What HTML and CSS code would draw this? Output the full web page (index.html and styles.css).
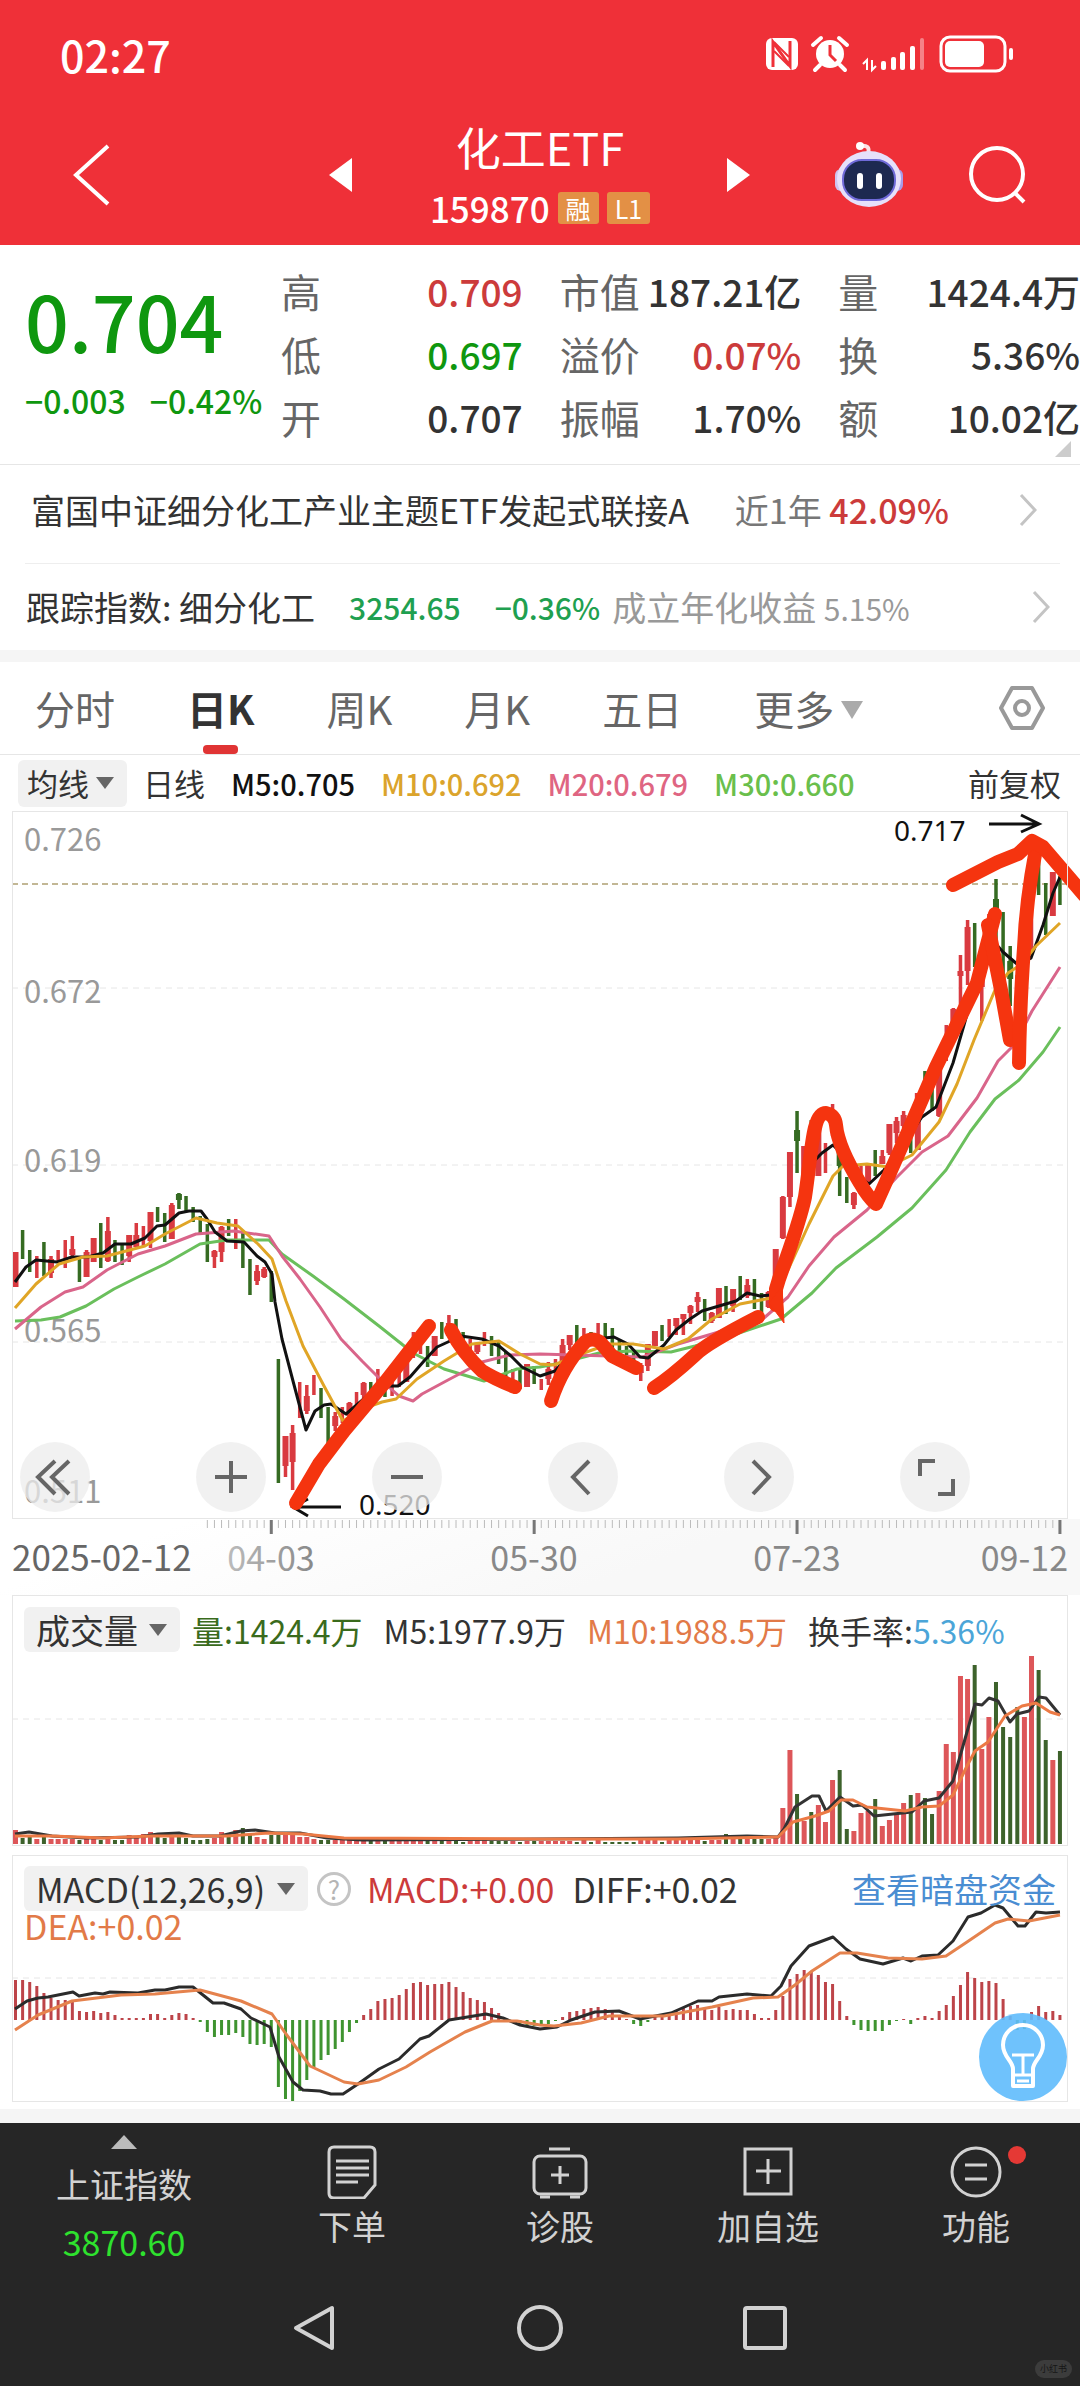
FILE: index.html
```html
<!DOCTYPE html>
<html lang="zh-CN">
<head>
    <meta charset="UTF-8">
    <meta name="viewport" content="width=device-width, initial-scale=1.0">
    <title>化工ETF 159870</title>
    <link rel="stylesheet" href="styles.css">
</head>
<body>

    <header class="header">
        <div class="status-bar">
            <span class="clock">02:27</span>
            <svg class="status-icons" width="250" height="40" viewBox="0 0 250 40" fill="#fff">
                <!-- nfc -->
                <rect x="2" y="4" width="32" height="32" rx="6"/>
                <path d="M9 33V8l17 24V7" fill="none" stroke="#ef3038" stroke-width="3"/>
                <path d="M10 8l15 15M10 17l15 15" stroke="#ef3038" stroke-width="2"/>
                <!-- alarm -->
                <circle cx="66" cy="20" r="14"/>
                <path d="M49 11l8-7M83 11l-8-7M56 31l-5 5M76 31l5 5" stroke="#fff" stroke-width="4" stroke-linecap="round"/>
                <path d="M66 11v10l6 6" fill="none" stroke="#ef3038" stroke-width="3"/>
                <!-- signal -->
                <path d="M103 36V26l-4 4M108 26v10l4-4" fill="none" stroke="#fff" stroke-width="2"/>
                <rect x="117" y="27" width="5" height="9" rx="2"/>
                <rect x="127" y="23" width="5" height="13" rx="2"/>
                <rect x="136" y="18" width="5" height="18" rx="2"/>
                <rect x="146" y="12" width="5" height="24" rx="2"/>
                <rect x="156" y="4" width="4" height="32" rx="2" opacity=".4"/>
                <!-- battery -->
                <rect x="177" y="3" width="64" height="34" rx="9" fill="none" stroke="#fff" stroke-width="3"/>
                <rect x="181" y="7" width="39" height="26" rx="5"/>
                <rect x="245" y="14" width="4" height="12" rx="2"/>
            </svg>
        </div>

        <div class="title-bar">
            <button class="icon-button back" aria-label="返回">
                <svg width="40" height="64" viewBox="0 0 40 64"><path d="M36 3L4 32l32 29" fill="none" stroke="#fff" stroke-width="4"/></svg>
            </button>
            <button class="icon-button prev" aria-label="上一个">
                <svg width="24" height="34" viewBox="0 0 24 34"><path d="M23 0v34L0 17z" fill="#fff"/></svg>
            </button>
            <div class="title">
                <h1>化工ETF</h1>
                <div class="code">159870 <span class="tag">融</span><span class="tag">L1</span></div>
            </div>
            <button class="icon-button next" aria-label="下一个">
                <svg width="24" height="34" viewBox="0 0 24 34"><path d="M0 0v34l23-17z" fill="#fff"/></svg>
            </button>
            <button class="icon-button robot" aria-label="智能助手">
                <svg width="72" height="68" viewBox="0 0 72 68">
                    <path d="M35 13C37 6 34 4 27 5" fill="none" stroke="#fbe3e6" stroke-width="4" stroke-linecap="round"/>
                    <circle cx="27" cy="5" r="4" fill="#fff"/>
                    <rect x="2" y="28" width="12" height="22" rx="6" fill="#cfc4f0"/>
                    <rect x="58" y="28" width="12" height="22" rx="6" fill="#a89be8"/>
                    <ellipse cx="36" cy="38" rx="32" ry="28" fill="#e6e0fa"/>
                    <rect x="10" y="19" width="52" height="40" rx="19" fill="#1d2950" stroke="#6f6ad8" stroke-width="2"/>
                    <rect x="24" y="32" width="6" height="16" rx="3" fill="#fff"/>
                    <rect x="43" y="32" width="6" height="16" rx="3" fill="#fff"/>
                </svg>
            </button>
            <button class="icon-button search" aria-label="搜索">
                <svg width="60" height="60" viewBox="0 0 60 60" fill="none" stroke="#fff" stroke-width="4"><circle cx="29" cy="29" r="26"/><path d="M46 47l10 10"/></svg>
            </button>
        </div>
    </header>

    <main>
        <section class="quote">
            <div class="price-block">
                <div class="price">0.704</div>
                <div class="change"><span>−0.003</span><span>−0.42%</span></div>
            </div>
            <dl class="stats">
                <div><dt>高</dt><dd class="up">0.709</dd></div>
                <div><dt>低</dt><dd class="down">0.697</dd></div>
                <div><dt>开</dt><dd>0.707</dd></div>
            </dl>
            <dl class="stats">
                <div><dt>市值</dt><dd>187.21亿</dd></div>
                <div><dt>溢价</dt><dd class="up">0.07%</dd></div>
                <div><dt>振幅</dt><dd>1.70%</dd></div>
            </dl>
            <dl class="stats">
                <div><dt>量</dt><dd>1424.4万</dd></div>
                <div><dt>换</dt><dd>5.36%</dd></div>
                <div><dt>额</dt><dd>10.02亿</dd></div>
            </dl>
            <span class="corner"></span>
        </section>

        <a class="info-row fund" href="#fund">
            <span>富国中证细分化工产业主题ETF发起式联接A</span>
            <span class="period">近1年 <b>42.09%</b></span>
            <svg class="chevron" width="18" height="34" viewBox="0 0 18 34"><path d="M2 2l14 15L2 32"/></svg>
        </a>
        <a class="info-row index" href="#index">
            <span>跟踪指数: 细分化工</span>
            <span class="index-value">3254.65</span>
            <span class="index-value">−0.36%</span>
            <span class="since">成立年化收益 <small>5.15%</small></span>
            <svg class="chevron" width="18" height="34" viewBox="0 0 18 34"><path d="M2 2l14 15L2 32"/></svg>
        </a>

        <div class="band"></div>

        <nav class="tabs">
            <button>分时</button>
            <button class="active">日K</button>
            <button>周K</button>
            <button>月K</button>
            <button>五日</button>
            <button class="more">更多</button>
            <button class="settings" aria-label="图表设置">
                <svg width="48" height="46" viewBox="0 0 48 46" fill="none" stroke="#999" stroke-width="4"><path d="M14 3h20l11 20-11 20H14L3 23z" stroke-linejoin="round"/><circle cx="24" cy="23" r="7"/></svg>
            </button>
        </nav>

        <div class="ma-row">
            <div class="dropdown small"><select aria-label="主图指标"><option>均线</option></select></div>
            <span class="kind">日线</span>
            <span class="ma5">M5:0.705</span>
            <span class="ma10">M10:0.692</span>
            <span class="ma20">M20:0.679</span>
            <span class="ma30">M30:0.660</span>
            <button class="adjust">前复权</button>
        </div>

        <section class="panel kline">
            <svg viewBox="0 0 1056 708">
                <g class="grid"><path d="M0 177h1056M0 354h1056M0 531h1056"/></g>
                <path class="last-price" d="M0 73h1056"/>
                <g class="scale">
                    <text x="12" y="40">0.726</text>
                    <text x="12" y="192">0.672</text>
                    <text x="12" y="361">0.619</text>
                    <text x="12" y="531">0.565</text>
                    <text x="12" y="692">0.511</text>
                </g>
                <g id="candles"></g>
                <g class="lines">
                    <polyline stroke="#6abf5c" points="3,510 29,509 48,506 74,495 102,478 126,466 153,453 188,433 215,429 257,429 270,443 301,465 332,488 367,515 401,542 432,558 472,570 505,558 528,556 549,552 587,542 618,540 659,541 683,535 721,524 769,508 800,482 824,457 865,426 900,397 934,359 958,321 983,288 1007,269 1031,241 1048,216"/>
                    <polyline stroke="#d9658a" points="3,518 29,496 53,481 71,476 95,459 126,443 153,435 184,423 222,420 257,425 270,445 288,468 308,496 329,528 350,550 370,570 387,585 401,590 410,583 436,569 470,551 498,544 528,543 562,544 631,546 666,533 700,523 752,507 776,486 797,455 822,426 855,399 884,367 910,341 936,325 965,287 986,250 1003,233 1020,200 1048,156"/>
                    <polyline stroke="#111" points="3,471 14,456 24,449 45,451 60,446 76,446 91,442 103,433 119,433 133,427 145,415 153,414 167,402 177,400 189,400 195,408 203,421 215,430 232,431 245,445 253,451 260,463 263,491 270,528 281,570 294,619 303,600 312,594 319,593 334,603 367,575 386,575 398,566 412,550 425,536 449,525 470,528 487,535 499,545 510,556 528,565 543,560 562,539 583,528 602,526 616,533 628,546 636,547 652,534 664,519 678,508 690,500 707,495 724,490 735,482 748,485 759,484 769,463 783,409 797,355 810,342 821,334 831,344 845,365 857,373 872,359 886,340 910,306 924,296 941,252 952,214 965,168 983,132 991,141 1005,153 1019,147 1031,114 1041,82 1048,66"/>
                    <polyline stroke="#e0a526" points="3,497 24,473 47,453 71,446 95,445 133,435 153,423 184,407 205,412 226,415 246,433 260,448 274,490 291,535 312,575 331,610 350,598 370,591 384,588 405,568 432,550 460,533 487,530 508,543 528,553 542,554 569,543 597,533 621,533 652,538 676,528 700,508 728,493 759,487 776,459 797,413 821,365 831,355 855,353 876,356 900,344 927,311 945,273 962,229 983,179 996,162 1010,153 1024,135 1048,112"/>
                </g>
                <!-- high / low markers -->
                <g class="marker">
                    <text x="882" y="30">0.717</text>
                    <path d="M977 13h50M1009 4l18 9-18 8"/>
                    <text x="347" y="704">0.520</text>
                    <path d="M329 696h-48M296 688l-15 8 15 9"/>
                </g>
                <!-- freehand trend drawing -->
                <g class="drawing">
                    <path d="M284 692L307 653L332 620L374 570L417 515"/>
                    <path d="M439 519Q450 541 470 560Q483 568 503 576"/>
                    <path d="M539 590Q550 556 573 531Q580 526 588 531L600 545L624 557"/>
                    <path d="M642 577Q659 566 683 544Q695 532 746 506"/>
                    <path d="M764 494L764 478L767 468Q788 410 793 386C800 340 800 302 814 302Q823 304 824 314Q826 336 848 372Q856 386 864 393Q880 358 924 256L965 172L983 103"/>
                    <path d="M976 114L989 179L998 229"/>
                    <path d="M1007 252Q1008 190 1012 137Q1014 90 1024 38" stroke-linecap="butt"/>
                    <path d="M941 74L986 51L1006 43L1020 30L1031 36L1072 84" stroke-linecap="butt"/>
                    <path d="M757 492L772 512L770 475z" class="tip"/>
                </g>
            </svg>
            <div class="tools">
                <button aria-label="最左"><svg viewBox="0 0 70 70"><path d="M35 19L18 35l17 17M49 19L32 35l17 17"/></svg></button>
                <button aria-label="放大"><svg viewBox="0 0 70 70"><path d="M19 35h32M35 19v32"/></svg></button>
                <button aria-label="缩小"><svg viewBox="0 0 70 70"><path d="M19 35h32"/></svg></button>
                <button aria-label="左移"><svg viewBox="0 0 70 70"><path d="M41 19L25 35l16 17"/></svg></button>
                <button aria-label="右移"><svg viewBox="0 0 70 70"><path d="M29 19l16 16-16 17"/></svg></button>
                <button aria-label="全屏"><svg viewBox="0 0 70 70"><path d="M20 34V19h15M53 37v15H38"/></svg></button>
            </div>
        </section>

        <div class="time-axis">
            <svg viewBox="0 0 1056 76">
                <defs>
                    <linearGradient id="fade"><stop offset="0" stop-color="#bbb"/><stop offset="1" stop-color="#888"/></linearGradient>
                </defs>
                <g id="ticks"></g>
                <text x="0" y="52" fill="#666" class="first">2025-02-12</text>
                <text x="259" y="52" text-anchor="middle" fill="url(#fade)">04-03</text>
                <text x="522" y="52" text-anchor="middle" fill="#888">05-30</text>
                <text x="785" y="52" text-anchor="middle" fill="#888">07-23</text>
                <text x="1056" y="52" text-anchor="end" fill="#888">09-12</text>
            </svg>
        </div>

        <section class="panel volume">
            <svg viewBox="0 0 1056 251">
                <g class="grid"><path d="M0 124h1056"/></g>
                <g id="volumes"></g>
                <g class="lines">
                    <polyline stroke="#333" points="3,239 17,237 40,241 74,243 126,242 146,239 167,238 181,241 208,241 229,236 243,235 263,238 288,238 315,243 350,245 528,244 666,243 735,241 766,242 772,234 783,212 800,201 807,201 814,216 828,202 841,211 850,210 862,221 900,217 912,206 927,203 941,186 955,137 963,109 970,110 977,103 986,106 998,127 1005,119 1017,116 1027,102 1034,103 1048,120"/>
                    <polyline stroke="#ec7a45" points="3,241 40,241 91,243 140,241 215,241 257,238 291,239 332,243 528,244 666,244 759,242 766,242 781,227 803,221 817,216 829,205 841,205 855,212 893,216 910,212 927,211 941,200 955,171 963,156 976,147 993,121 1010,111 1024,108 1038,117 1048,120"/>
                </g>
            </svg>
            <div class="panel-head">
                <div class="dropdown"><select aria-label="副图指标一"><option>成交量</option></select></div>
                <span class="vol">量:1424.4万</span>
                <span>M5:1977.9万</span>
                <span class="orange">M10:1988.5万</span>
                <span>换手率:<em>5.36%</em></span>
            </div>
        </section>

        <section class="panel macd">
            <svg viewBox="0 0 1056 247">
                <g class="grid"><path d="M0 123h1056"/></g>
                <g id="macd-bars"></g>
                <g class="lines">
                    <polyline stroke="#2b2b2b" points="3,154 15,146 26,143 36,142 61,137 67,141 83,138 91,139 98,137 126,138 143,135 153,135 167,132 181,132 201,148 212,148 229,154 239,163 258,172 267,202 281,227 291,235 308,236 319,239 331,239 346,229 367,214 387,204 408,184 417,181 437,165 474,159 491,163 508,170 528,174 545,172 559,165 583,157 607,156 628,164 659,158 686,146 700,146 707,142 735,139 759,141 769,131 779,111 797,91 821,82 834,94 848,104 871,109 891,103 899,106 910,101 926,100 941,86 956,62 969,58 983,50 991,53 1006,71 1013,71 1024,57 1034,58 1048,57"/>
                    <polyline stroke="#e5824d" points="3,175 26,160 60,146 109,140 143,139 188,135 229,146 260,159 274,179 298,211 332,227 346,229 367,225 394,212 418,197 453,177 480,166 505,166 528,170 542,171 569,168 597,161 652,161 700,152 741,143 766,142 783,130 800,116 828,98 845,98 876,103 910,104 934,101 955,87 983,68 996,64 1017,66 1048,60"/>
                </g>
            </svg>
            <div class="panel-head">
                <div class="dropdown"><select aria-label="副图指标二"><option>MACD(12,26,9)</option></select></div>
                <button class="help" aria-label="说明">?</button>
                <span class="up">MACD:+0.00</span>
                <span class="diff">DIFF:+0.02</span>
                <a class="dark-pool" href="#flow">查看暗盘资金</a>
                <span class="dea">DEA:+0.02</span>
            </div>
            <button class="bulb" aria-label="提示">
                <svg viewBox="0 0 88 88" fill="none" stroke="#fff" stroke-width="4">
                    <path d="M34 56c0-8-10-12-10-24a20 20 0 0 1 40 0c0 12-10 16-10 24v17H34z" stroke-linejoin="round"/>
                    <path d="M33 42h22M44 42v20M34 62h20M38 68h12" stroke-width="3"/>
                </svg>
            </button>
        </section>

        <div class="band last"></div>
    </main>

    <footer class="footer">
        <nav class="bottom-bar">
            <a class="market" href="#market">
                <svg width="26" height="14" viewBox="0 0 26 14"><path d="M13 0l13 14H0z" fill="#bbb"/></svg>
                <span>上证指数</span>
                <strong>3870.60</strong>
            </a>
            <a href="#order">
                <svg width="56" height="56" viewBox="0 0 56 56"><path d="M10 4h36q5 0 5 5v33L40 55H10q-5 0-5-5V9q0-5 5-5zM12 18h33M12 25h33M12 32h33M12 39h22"/></svg>
                <span>下单</span>
            </a>
            <a href="#diagnose">
                <svg width="56" height="56" viewBox="0 0 56 56"><rect x="2" y="13" width="52" height="38" rx="6"/><path d="M17 6h21M28 23v18M19 32h18M8 54h10M38 54h10"/></svg>
                <span>诊股</span>
            </a>
            <a href="#watch">
                <svg width="56" height="56" viewBox="0 0 56 56"><path d="M5 6h46v45H5zM28 16v25M16 28h25"/></svg>
                <span>加自选</span>
            </a>
            <a href="#functions">
                <svg width="56" height="56" viewBox="0 0 56 56"><circle cx="28" cy="29" r="24"/><path d="M17 22h22M17 36h22"/></svg>
                <span>功能</span>
                <i class="dot"></i>
            </a>
        </nav>
        <div class="system-nav">
            <button aria-label="系统返回"><svg viewBox="0 0 48 48"><path d="M41 4v40L5 24z"/></svg></button>
            <button aria-label="主屏幕"><svg viewBox="0 0 48 48"><circle cx="24" cy="24" r="21"/></svg></button>
            <button aria-label="最近任务"><svg viewBox="0 0 48 48"><rect x="4" y="4" width="40" height="40" rx="2"/></svg></button>
        </div>
        <span class="watermark">小红书</span>
    </footer>

    <script src="script.js"></script>
</body>
</html>
```

FILE: styles.css
```css
* {
    box-sizing: border-box;
}

body {
    margin: 0;
    font-family: 'Noto Sans CJK SC', 'Noto Sans', sans-serif;
    font-size: 34px;
    line-height: 40px;
    color: #333;
    background-color: #fff;
    overflow-x: hidden;
}

button, select {
    font: inherit;
    color: inherit;
    padding: 0;
    border: none;
    background: none;
}

a {
    color: inherit;
    text-decoration: none;
}

svg {
    display: block;
}

.up {
    color: #cc3b3b;
}

.down {
    color: #0f970f;
}

/* Header */
.header {
    height: 245px;
    color: #fff;
    background-color: #ef3038;
}

.status-bar {
    display: flex;
    justify-content: space-between;
    align-items: center;
    height: 108px;
    padding: 0 66px 0 60px;
}

.clock {
    font-size: 43px;
    font-weight: 500;
}

.title-bar {
    position: relative;
    display: flex;
    align-items: center;
    justify-content: center;
    height: 133px;
}

.title {
    width: 374px;
    padding-top: 5px;
    text-align: center;
}

.title h1 {
    margin: 0;
    font-size: 45px;
    font-weight: 400;
    line-height: 62px;
}

.code {
    display: flex;
    align-items: center;
    justify-content: center;
    gap: 8px;
    font-size: 35px;
    font-weight: 500;
    line-height: 60px;
}

.tag {
    padding: 0 8px;
    font-size: 25px;
    font-weight: 400;
    line-height: 32px;
    border-radius: 3px;
    background-color: #e39045;
}

.icon-button.back {
    position: absolute;
    left: 72px;
}

.icon-button.robot {
    position: absolute;
    right: 175px;
}

.icon-button.search {
    position: absolute;
    right: 52px;
}

/* Quote */
.quote {
    position: relative;
    display: flex;
    gap: 37px;
    padding: 15px 0 15px;
    border-bottom: 1px solid #e6e6e6;
}

.price-block {
    width: 244px;
    padding: 20px 0 0 25px;
    color: #0f970f;
}

.price {
    font-size: 77px;
    font-weight: 500;
    line-height: 80px;
}

.change {
    display: flex;
    gap: 24px;
    margin-top: 20px;
    font-size: 32px;
    font-weight: 500;
    white-space: nowrap;
}

.stats {
    flex: 1;
    margin: 0;
    line-height: 63px;
}

.stats div {
    display: flex;
    justify-content: space-between;
    white-space: nowrap;
}

.stats dt {
    font-size: 40px;
    color: #666;
}

.stats dd {
    margin: 0;
    font-size: 37px;
    font-weight: 500;
}

.corner {
    position: absolute;
    right: 9px;
    bottom: 7px;
    border-left: 16px solid transparent;
    border-bottom: 16px solid #ccc;
}

/* Fund and index rows */
.info-row {
    display: flex;
    align-items: center;
    white-space: nowrap;
}

.fund {
    height: 99px;
    margin: 0 20px 0 25px;
    padding: 0 23px 8px 6px;
    border-bottom: 1px solid #eee;
}

.period {
    margin-left: 46px;
    color: #777;
}

.period b {
    font-weight: 500;
    color: #cc3b3b;
}

.index {
    height: 86px;
    padding: 0 30px 0 26px;
}

.index-value {
    margin-left: 34px;
    font-size: 30px;
    font-weight: 500;
    color: #1fa050;
}

.since {
    margin-left: 12px;
    color: #999;
}

.since small {
    font-size: 30px;
}

.chevron {
    margin-left: auto;
    fill: none;
    stroke: #c4c4c4;
    stroke-width: 3;
}

.band {
    height: 12px;
    background-color: #f5f5f5;
}

/* Period tabs */
.tabs {
    display: flex;
    gap: 72px;
    height: 93px;
    padding: 0 34px 0 35px;
    font-size: 40px;
    color: #666;
    border-bottom: 1px solid #e6e6e6;
}

.tabs .active {
    position: relative;
    font-weight: 700;
    color: #333;
}

.tabs .active::after {
    content: "";
    position: absolute;
    left: 50%;
    bottom: 0;
    width: 35px;
    height: 9px;
    margin-left: -18px;
    border-radius: 4px;
    background-color: #e03434;
}

.tabs .more::after {
    content: "";
    display: inline-block;
    margin-left: 7px;
    vertical-align: 6px;
    border: 11px solid transparent;
    border-top: 18px solid #aaa;
    border-bottom: none;
}

.tabs .settings {
    margin-left: auto;
}

/* Indicator selectors */
.dropdown {
    position: relative;
    border-radius: 6px;
    background-color: #f1f1f1;
}

.dropdown select {
    appearance: none;
    display: block;
    height: 45px;
    padding: 0 42px 0 12px;
    font-size: 34px;
}

.dropdown.small select {
    height: 47px;
    padding: 0 38px 0 9px;
    font-size: 31px;
}

.dropdown::after {
    content: "";
    position: absolute;
    right: 13px;
    top: 17px;
    border: 9px solid transparent;
    border-top: 12px solid #666;
    border-bottom: none;
    pointer-events: none;
}

.ma-row {
    display: flex;
    align-items: center;
    gap: 26px;
    height: 56px;
    padding: 0 19px 0 18px;
    font-size: 29px;
    font-weight: 500;
    white-space: nowrap;
}

.ma-row .dropdown, .ma-row .kind, .ma-row .adjust {
    font-size: 31px;
    font-weight: 400;
}

.ma-row .kind {
    margin-left: -10px;
}

.ma-row .adjust {
    margin-left: auto;
}

.ma5 {
    color: #111;
}

.ma10 {
    color: #dba42c;
}

.ma20 {
    color: #df6582;
}

.ma30 {
    color: #6abf4c;
}

/* Chart panels: plot and header share one cell */
.panel {
    position: relative;
    display: grid;
    margin: 0 12px;
    outline: 1px solid #e6e6e6;
    outline-offset: -1px;
}

.panel > svg, .panel-head {
    grid-area: 1 / 1;
}

.panel > svg, .time-axis svg {
    width: 100%;
    height: auto;
    overflow: visible;
}

.grid path {
    stroke: #e6e6e6;
    stroke-dasharray: 6 5;
}

.last-price {
    stroke: #c2b795;
    stroke-width: 2;
    stroke-dasharray: 6 4;
}

.scale text {
    font-size: 31px;
    fill: #999;
}

.lines polyline {
    fill: none;
    stroke-width: 3;
    stroke-linejoin: round;
}

.rise {
    fill: #d93a40;
}

.fall {
    fill: #356b22;
}

.marker text {
    font-family: 'Noto Sans', sans-serif;
    font-size: 28px;
    fill: #111;
}

.marker path {
    fill: none;
    stroke: #111;
    stroke-width: 3;
}

.drawing path {
    fill: none;
    stroke: #f5340f;
    stroke-width: 14;
    stroke-linecap: round;
    stroke-linejoin: round;
}

.drawing .tip {
    fill: #f5340f;
    stroke-width: 1;
}

.tools {
    position: absolute;
    left: 8px;
    bottom: 7px;
    display: flex;
    gap: 106px;
}

.tools button {
    width: 70px;
    height: 70px;
    border-radius: 50%;
    background-color: rgba(236, 236, 236, 0.75);
}

.tools path {
    fill: none;
    stroke: #666;
    stroke-width: 4;
}

.time-axis {
    padding: 0 12px;
    background: linear-gradient(160deg, #fff 15%, #f8f8f8 60%);
}

.time-axis text {
    font-size: 34px;
}

.time-axis .first {
    font-size: 35px;
}

.tick {
    fill: #bbb;
}

.tick.major {
    fill: #777;
}

.panel-head {
    display: flex;
    align-items: center;
    align-self: start;
    gap: 21px;
    padding: 12px 12px 0;
    font-size: 32px;
    white-space: nowrap;
}

.panel-head em {
    font-style: normal;
    color: #4ba5d8;
}

.volume .dropdown {
    margin-right: -9px;
}

.volume .rise {
    fill: #dd5659;
}

.volume .fall {
    fill: #3d622b;
}

.vol {
    color: #3a6b1c;
}

.orange, .dea {
    color: #e27a48;
}

.macd {
    margin-top: 9px;
}

.macd .panel-head {
    flex-wrap: wrap;
    gap: 0;
    padding-top: 11px;
    font-size: 34px;
}

.macd .rise {
    fill: #bd4449;
}

.macd .fall {
    fill: #3f9430;
}

.help {
    width: 34px;
    height: 34px;
    margin: 0 16px 0 9px;
    font-size: 26px;
    line-height: 28px;
    color: #b5b5b5;
    border: 3px solid #c4c4c4;
    border-radius: 50%;
}

.diff {
    margin-left: 18px;
}

.dark-pool {
    margin-left: auto;
    color: #4a8dd2;
}

.dea {
    flex-basis: 100%;
    line-height: 30px;
}

.bulb {
    position: absolute;
    right: 1px;
    bottom: 1px;
    width: 88px;
    height: 88px;
    border-radius: 50%;
    background-color: rgba(95, 187, 252, 0.9);
}

.band.last {
    height: 14px;
    margin-top: 7px;
}

/* Footer */
.footer {
    position: relative;
    color: #d2d2d2;
    background-color: #262626;
}

.bottom-bar {
    display: flex;
    height: 145px;
}

.bottom-bar a {
    position: relative;
    flex: 208;
    display: flex;
    flex-direction: column;
    align-items: center;
    padding-top: 20px;
}

.bottom-bar a span {
    margin-top: 7px;
}

.bottom-bar a > svg {
    fill: none;
    stroke: #d2d2d2;
    stroke-width: 3;
}

.bottom-bar .market {
    flex: 248;
    padding-top: 12px;
}

.bottom-bar .market > svg {
    stroke: none;
}

.bottom-bar .market span {
    margin-top: 15px;
}

.market strong {
    margin-top: 18px;
    font-weight: 400;
    color: #2ee22e;
}

.dot {
    position: absolute;
    left: calc(50% + 32px);
    top: 23px;
    width: 18px;
    height: 18px;
    border-radius: 50%;
    background-color: #e53935;
}

.system-nav {
    display: flex;
    justify-content: center;
    gap: 177px;
    padding: 36px 0 34px;
}

.system-nav button {
    width: 48px;
    height: 48px;
}

.system-nav svg {
    fill: none;
    stroke: #d2d2d2;
    stroke-width: 4;
    stroke-linejoin: round;
}

.watermark {
    position: absolute;
    right: 8px;
    bottom: 8px;
    padding: 0 5px;
    font-size: 9px;
    line-height: 18px;
    color: #161616;
    border-radius: 9px;
    background-color: #3c3c3c;
}
```

FILE: script.js
```js
const STEP = 7.105;
const START = 3.5;

// direction, high, low, body top, body bottom (body is optional)
const candles = `
r 441 476 441 476|g 419 448|g 439 461|r 445 467|g 431 465|r 445 467 448 462|r 439 451|r 429 457|r 425 448 438 444|g 446 471
r 439 466 441 466|r 427 451 427 451|g 412 457|r 406 451 420 450|g 429 451|g 433 454|r 424 451 424 445|r 412 436 424 436|r 415 435|r 401 437 401 430
g 396 411|g 402 431|r 392 428 394 428|g 382 398 383 389|g 385 400|g 396 411|g 405 423|g 413 451|r 439 457 440 446|r 415 451 416 441
g 408 425|r 408 438|g 421 457|g 448 484|r 454 474 460 470|r 456 467 458 466|g 460 491|g 548 672|r 625 666 625 655|r 614 679 622 651
r 571 607|r 574 603 585 600|r 564 584|g 577 607|g 596 633|r 601 620 605 615|r 596 612|r 591 605 592 605|r 581 598|r 571 588 572 584
g 571 581|r 558 576|g 575 586|r 568 585|r 561 576|r 551 571 551 571|r 521 547|r 535 543|g 535 556|r 525 545 525 545
g 511 528|r 504 525 512 525|g 508 521|g 521 538|r 528 541|r 533 543 533 541|r 521 535|g 525 545|g 530 553|g 541 568
r 558 575|g 558 578|r 553 576 553 576|g 555 573|r 568 579|r 551 574 558 568|r 548 566|r 528 552 534 552|r 524 539 524 534|g 514 535
r 517 531|g 521 535|r 512 530|g 512 533|g 517 539|g 528 541|g 535 545|g 539 552|r 552 570 554 562|r 533 560 533 555
r 520 535 520 535|g 514 530|r 508 526|r 507 524 507 515|r 503 524 503 508|r 494 513 495 502|r 481 501 486 491|g 488 510|r 501 512 502 510|r 477 507 477 507
g 475 503|r 478 501 478 495|g 465 489|r 468 487 474 485|g 468 498|g 482 502|r 480 497 481 496|r 438 485 438 485|r 385 428 386 427|r 341 396 341 386
g 300 362 319 330|r 335 365 335 365|g 309 355|r 313 365 313 365|r 332 362|r 293 325|g 325 385 340 355|g 366 392|r 381 398 382 394|r 355 371
r 352 373 352 373|g 339 365|r 339 353 345 353|r 313 344 313 342|r 306 332 310 322|r 300 317 304 315|g 302 342|r 282 339 282 339|g 260 294|g 273 300
r 256 306 256 305|r 214 250|r 197 225 198 225|r 144 210 160 165|r 109 174 116 160|g 112 156|r 153 210 153 176|r 103 141|g 68 128 88 98|g 101 168
g 135 195 150 168|g 164 218|r 114 160|r 38 141|g 42 84|g 72 124|r 61 105 61 105|g 65 94`
    .trim().split(/[|\n]/).map(row => row.split(' '));

const volumes = [
    14, 6, 7, 5, 7, 5, 5, 5, 5, 4, 5, 5, 4, 5, 4, 4, 9, 7, 10, 12, 7, 6, 8, 8, 6, 4, 4, 5, 6, 12,
    7, 14, 16, 10, 7, 5, 9, 9, 9, 9, 7, 7, 5, 4, 4, 4, 4, 4, 4, 4, 3, 4, 3, 4, 4, 4, 4, 4, 3, 4,
    3, 4, 3, 2, 3, 4, 4, 3, 3, 3, 3, 2, 3, 3, 3, 3, 3, 3, 3, 2, 4, 2, 4, 2, 2, 2, 2, 2, 4, 4,
    4, 2, 4, 4, 4, 4, 4, 3, 4, 4, 10, 5, 5, 5, 5, 5, 5, 7, 36, 94, 50, 23, 32, 39, 22, 64, 74, 15, 13, 31,
    33, 45, 18, 24, 30, 41, 49, 51, 46, 30, 53, 100, 92, 168, 165, 179, 95, 127, 162, 117, 107, 137, 127, 188, 174, 104, 84, 93
];

const macd = [
    40, 40, 38, 34, 27, 22, 20, 20, 18, 9, 8, 9, 7, 8, 5, 2, 2, 2, 2, 6, 6, 2, 5, 7, 6, 2, -2, -12, -17, -15,
    -15, -13, -17, -24, -25, -24, -27, -67, -79, -81, -71, -60, -47, -40, -35, -29, -22, -12, -3, 5, 11, 19, 21, 22, 25, 31, 37, 38, 35, 36,
    36, 38, 33, 28, 22, 20, 18, 12, 7, 2, -2, -5, -6, -6, -5, -4, -1, 3, 8, 9, 11, 12, 13, 11, 9, 5, 1, -4, -6, -2,
    3, 5, 7, 9, 12, 14, 15, 12, 10, 13, 10, 11, 10, 10, 6, 2, 2, 10, 24, 41, 46, 50, 49, 45, 38, 36, 19, 4, -5, -10,
    -11, -11, -11, -5, -1, 1, -4, 2, 4, 2, 9, 15, 24, 35, 48, 42, 38, 39, 37, 21, 4, -10, -9, 8, 14, 8, 9, 5
];

function addBar(group, i, top, bottom, width, className) {
    const rect = document.createElementNS('http://www.w3.org/2000/svg', 'rect');
    rect.setAttribute('x', START + i * STEP - width / 2);
    rect.setAttribute('y', top);
    rect.setAttribute('width', width);
    rect.setAttribute('height', bottom - top);
    rect.setAttribute('class', className);
    group.appendChild(rect);
}

const candleGroup = document.getElementById('candles');
const volumeGroup = document.getElementById('volumes');
const macdGroup = document.getElementById('macd-bars');
const tickGroup = document.getElementById('ticks');

candles.forEach(([direction, high, low, top, bottom], i) => {
    const color = direction === 'r' ? 'rise' : 'fall';
    addBar(candleGroup, i, high, low, 3.5, color);
    if (top) {
        addBar(candleGroup, i, top, bottom, 6, color);
    }
    addBar(volumeGroup, i, 249 - volumes[i], 249, color === 'rise' ? 5 : 4, color);
});

macd.forEach((value, i) => {
    addBar(macdGroup, i, 165 - Math.max(value, 0), 165 - Math.min(value, 0), 3, value > 0 ? 'rise' : 'fall');
});

// One tick per trading day, a long one every 37 days
for (let i = 27; i < 148; i++) {
    const major = (147 - i) % 37 === 0;
    addBar(tickGroup, i, 1, major ? 15 : 9, major ? 3 : 1, major ? 'tick major' : 'tick');
}
```
